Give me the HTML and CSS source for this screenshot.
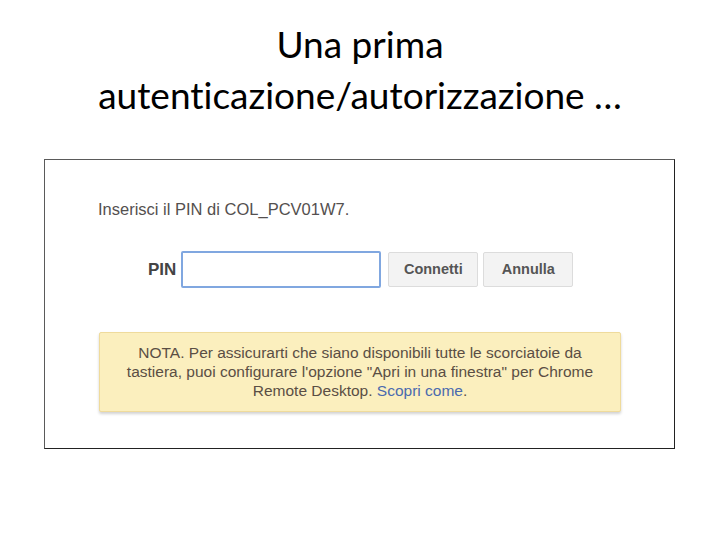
FILE: index.html
```html
<!DOCTYPE html>
<html>
    <head>
        <meta charset="utf-8" />
        <title>Una prima autenticazione/autorizzazione</title>
        <link rel="stylesheet" href="styles.css">
    </head>
    <body>
        <h1 class="slide-title">Una prima<br>autenticazione/autorizzazione …</h1>
        <div class="shot">
            <p class="pin-prompt">Inserisci il PIN di COL_PCV01W7.</p>
            <div class="pin-row">
                <label class="pin-label">PIN</label>
                <div class="pin-input"></div>
                <div class="btn">Connetti</div>
                <div class="btn">Annulla</div>
            </div>
            <div class="note">
                NOTA. Per assicurarti che siano disponibili tutte le scorciatoie da<br>
                tastiera, puoi configurare l'opzione "Apri in una finestra" per Chrome<br>
                Remote Desktop. <span class="note-link">Scopri come</span>.
            </div>
        </div>
    </body>
</html>
```

FILE: styles.css
```css
body {
    margin: 0;
    background: #ffffff;
}
.slide-title {
    margin: 18px 0 0 0;
    font-family: Lato, "Liberation Sans", sans-serif;
    font-weight: normal;
    font-size: 37px;
    line-height: 51px;
    text-align: center;
    color: #000000;
    font-variant-ligatures: none;
}
.shot {
    margin: 39px 0 0 44px;
    width: 629px;
    height: 288px;
    border: 1px solid #5a5a5a;
    border-right-color: #222222;
    border-bottom-color: #222222;
    font-family: "Liberation Sans", Arial, sans-serif;
    font-size: 14px;
}
.pin-prompt {
    margin: 0;
    padding: 40px 0 0 53px;
    font-size: 16.5px;
    line-height: 18px;
    color: #54504f;
}
.pin-row {
    display: flex;
    align-items: center;
    gap: 7px;
    margin: 33px 0 0 103px;
}
.pin-label {
    font-size: 17px;
    font-weight: bold;
    color: #444444;
    margin-right: -2px;
}
.pin-input {
    width: 196px;
    height: 33px;
    border: 2px solid #80a7e0;
    border-radius: 2px;
}
.btn {
    width: 88px;
    height: 33px;
    line-height: 33px;
    text-align: center;
    font-size: 14.5px;
    font-weight: bold;
    color: #555555;
    background: #f3f3f3;
    border: 1px solid #dcdcdc;
    border-radius: 2px;
}
.btn + .btn {
    margin-left: -2px;
}
.note {
    margin: 44px 0 0 54px;
    width: 520px;
    padding: 10px 0 11px;
    text-align: center;
    font-size: 15.5px;
    line-height: 19px;
    color: #5a4e44;
    background: #fbefbe;
    border: 1px solid #efdb9c;
    border-radius: 2px;
    box-shadow: 0 2px 3px rgba(0, 0, 0, 0.18);
}
.note-link {
    color: #4a6aae;
}
```
